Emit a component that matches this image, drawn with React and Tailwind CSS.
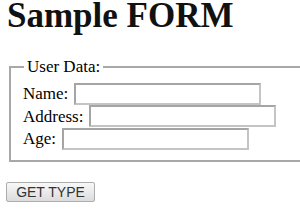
import React from 'react'

function Field({ label }) {
  return (
    <div className="flex items-center h-[21px]">
      <label className="leading-none">{label}</label>
      <input
        type="text"
        className="ml-[6px] w-[187px] h-[22px] border-2 border-solid border-[#c4c4c4] border-t-[#a5a5a5] border-l-[#a5a5a5] bg-white outline-none"
      />
    </div>
  )
}

function App() {
  return (
    <div className="w-[300px] h-[210px] overflow-hidden bg-white text-black font-['Liberation_Serif',serif] text-[17px] pl-[7px]">
      <h1 className="pt-[1px] h-[32px] text-[35px] leading-[29px] font-bold text-[#111]">Sample FORM</h1>

      {/* User data block */}
      <fieldset className="mt-[25px] ml-[2px] w-[400px] border-2 border-solid border-[#a8a8a8] pl-[12px] pt-[7px] pb-[11px]">
        <legend className="ml-[1px] px-[3px] leading-[19px]">User Data:</legend>
        <div className="flex flex-col gap-[1.5px]">
          <Field label="Name:" />
          <Field label="Address:" />
          <Field label="Age:" />
        </div>
      </fieldset>

      <button className="mt-[20px] ml-[-1px] w-[89px] h-[20px] border border-solid border-[#adadad] rounded-[2px] bg-gradient-to-b from-[#f8f8f8] to-[#dcdcdc] font-['Liberation_Sans',sans-serif] text-[14px] leading-none text-[#333]">
        GET TYPE
      </button>
    </div>
  )
}

export default App
